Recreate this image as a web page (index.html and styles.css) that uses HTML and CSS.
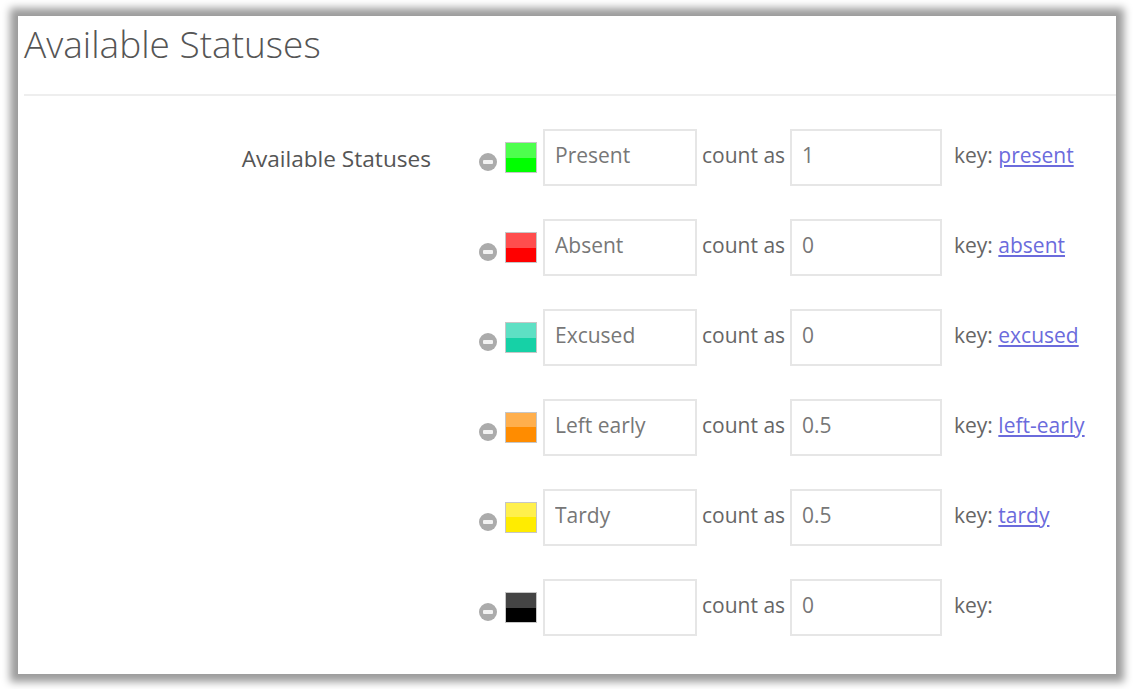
FILE: index.html
```html
<!DOCTYPE html>
<html>
<head>
<meta charset="utf-8">
<link rel="stylesheet" href="styles.css">
</head>
<body>
<div class="panel">
  <div class="header"><h1 class="title">Available Statuses</h1></div>
  <div class="form">
    <div class="label">Available Statuses</div>
    <div class="rows">
      <div class="row">
        <span class="minus"></span>
        <span class="swatch sw-green"></span>
        <input class="field name" type="text" value="Present">
        <span class="count">count as</span>
        <input class="field num" type="text" value="1">
        <span class="key">key: <a href="#">present</a></span>
      </div>
      <div class="row">
        <span class="minus"></span>
        <span class="swatch sw-red"></span>
        <input class="field name" type="text" value="Absent">
        <span class="count">count as</span>
        <input class="field num" type="text" value="0">
        <span class="key">key: <a href="#">absent</a></span>
      </div>
      <div class="row">
        <span class="minus"></span>
        <span class="swatch sw-teal"></span>
        <input class="field name" type="text" value="Excused">
        <span class="count">count as</span>
        <input class="field num" type="text" value="0">
        <span class="key">key: <a href="#">excused</a></span>
      </div>
      <div class="row">
        <span class="minus"></span>
        <span class="swatch sw-orange"></span>
        <input class="field name" type="text" value="Left early">
        <span class="count">count as</span>
        <input class="field num" type="text" value="0.5">
        <span class="key">key: <a href="#">left-early</a></span>
      </div>
      <div class="row">
        <span class="minus"></span>
        <span class="swatch sw-yellow"></span>
        <input class="field name" type="text" value="Tardy">
        <span class="count">count as</span>
        <input class="field num" type="text" value="0.5">
        <span class="key">key: <a href="#">tardy</a></span>
      </div>
      <div class="row">
        <span class="minus"></span>
        <span class="swatch sw-black"></span>
        <input class="field name" type="text" value="">
        <span class="count">count as</span>
        <input class="field num" type="text" value="0">
        <span class="key">key:</span>
      </div>
    </div>
  </div>
</div>
</body>
</html>
```
FILE: styles.css
```css
html, body {
  margin: 0;
  background: #ffffff;
}
body {
  padding: 16px 17px 15px 18px;
  font-family: "Open Sans", "Liberation Sans", sans-serif;
  color: #666;
}
.panel {
  height: 658px;
  background: #fff;
  box-shadow: 0 0 8px 8px #9c9c9c;
  overflow: hidden;
}
.header {
  margin-left: 6px;
  padding-top: 4px;
  padding-bottom: 26px;
  border-bottom: 2px solid #eeeeee;
}
.title {
  margin: 0;
  font-size: 37px;
  font-weight: 300;
  line-height: 48px;
  color: #555;
}
.form {
  display: grid;
  grid-template-columns: 413px 1fr;
  column-gap: 48px;
  margin-top: 33px;
}
.label {
  text-align: right;
  font-size: 22.6px;
  line-height: 30px;
  padding-top: 15px;
  color: #555;
}
.rows {
  display: flex;
  flex-direction: column;
  gap: 33px;
}
.row {
  display: flex;
  align-items: center;
  height: 57px;
  font-size: 21px;
}
.minus {
  position: relative;
  width: 18px;
  height: 18px;
  border-radius: 50%;
  background: #ababab;
  margin-top: 8px;
  flex: none;
}
.minus::after {
  content: "";
  position: absolute;
  left: 4px;
  top: 7px;
  width: 10px;
  height: 4px;
  border-radius: 1px;
  background: #f2f2f2;
}
.swatch {
  box-sizing: border-box;
  width: 32px;
  height: 31px;
  margin-left: 8px;
  border: 1px solid #c6c6c6;
  flex: none;
}
.sw-green { background: linear-gradient(#4dff4d 50%, #00ff00 50%); }
.sw-red { background: linear-gradient(#ff4d4d 50%, #ff0000 50%); }
.sw-teal { background: linear-gradient(#5ee0c4 50%, #16d1a6 50%); }
.sw-orange { background: linear-gradient(#ffaf4d 50%, #ff8c00 50%); }
.sw-yellow { background: linear-gradient(#fff04d 50%, #ffec00 50%); }
.sw-black { background: linear-gradient(#444444 50%, #000000 50%); }
.field {
  box-sizing: border-box;
  height: 57px;
  border: 2px solid #e6e6e6;
  padding: 0 10px 6px;
  margin: 0;
  font-family: "Open Sans", "Liberation Sans", sans-serif;
  font-size: 21px;
  color: #777;
  background: #fff;
  outline: none;
  flex: none;
}
.name {
  width: 154px;
  margin-left: 6px;
}
.num {
  width: 152px;
}
.count {
  box-sizing: border-box;
  width: 93px;
  padding-left: 5px;
  padding-bottom: 6px;
  white-space: nowrap;
  color: #666;
}
.key {
  margin-left: 12px;
  padding-bottom: 6px;
  white-space: nowrap;
  color: #666;
}
.key a {
  color: #6b6bdc;
  text-decoration: underline;
}
```
